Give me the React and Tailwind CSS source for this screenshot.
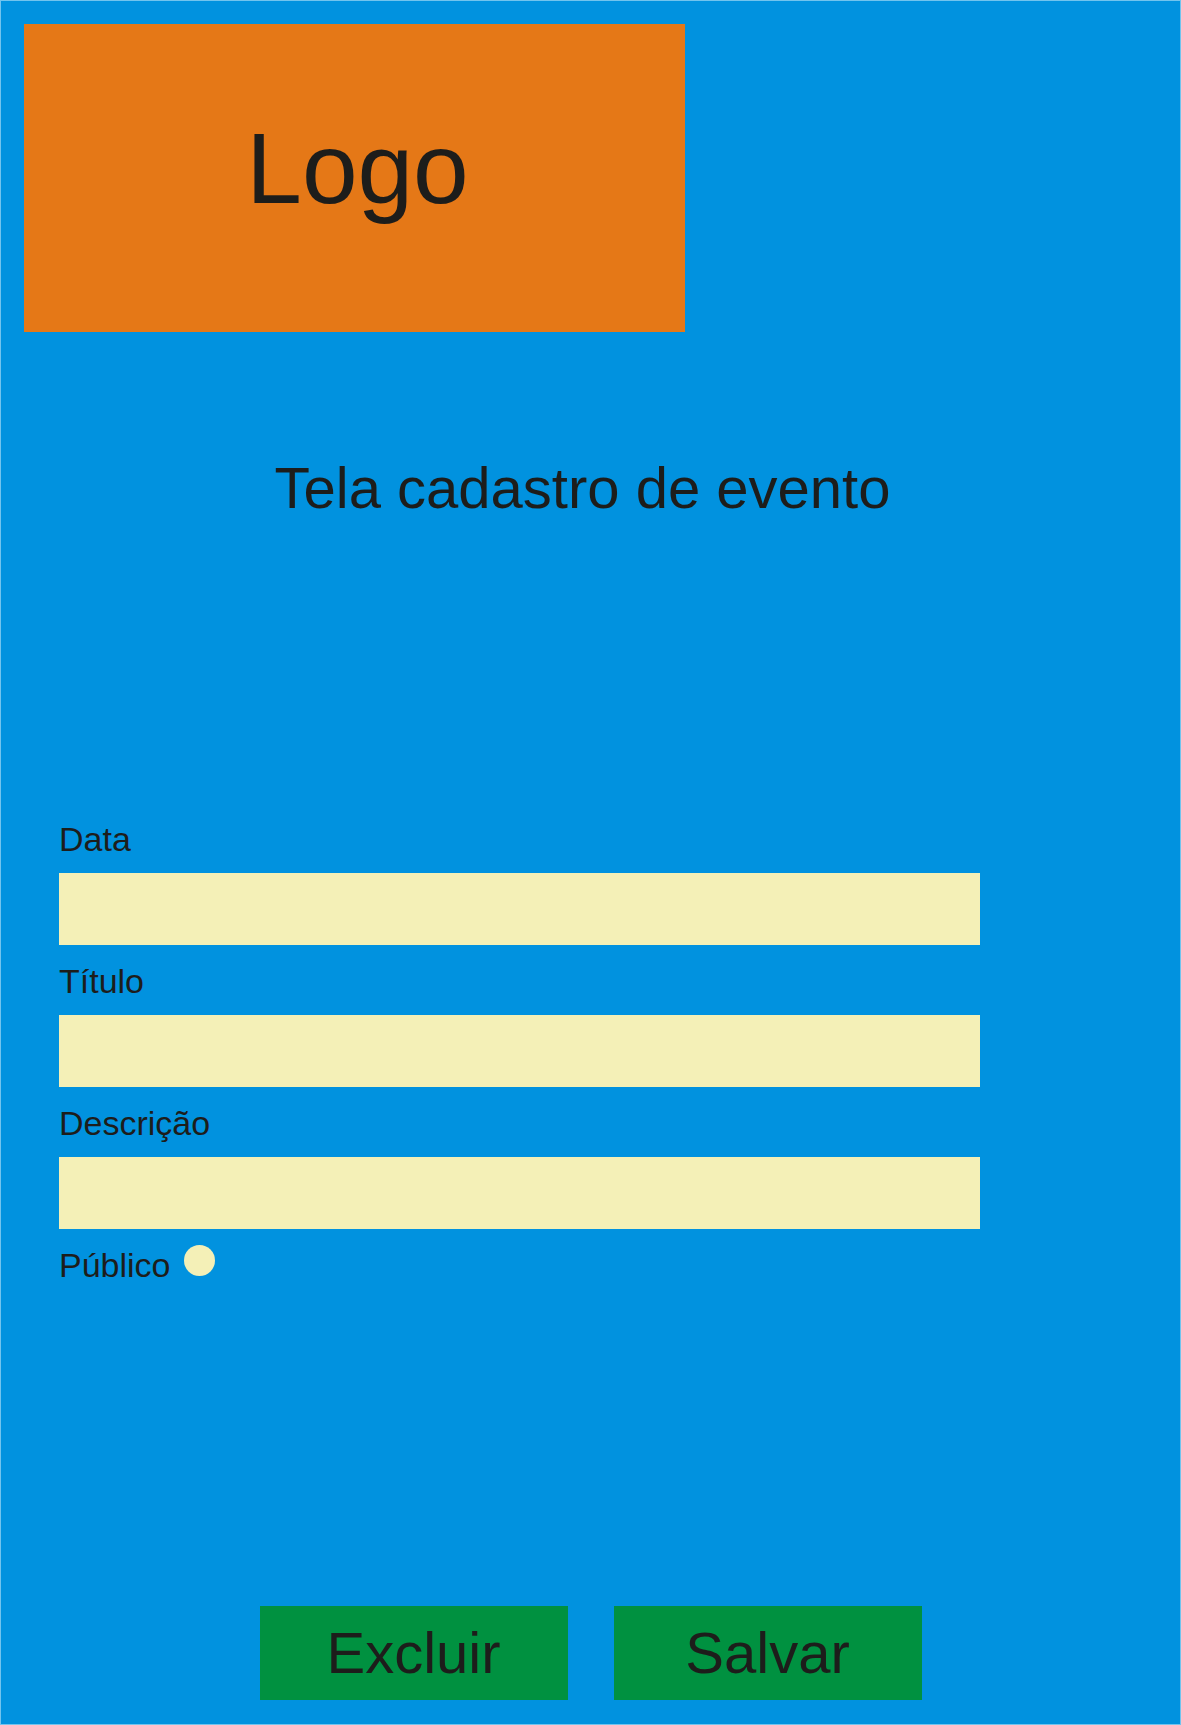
import React, { useState } from 'react';

const fields = [
    { label: 'Data', name: 'data' },
    { label: 'Título', name: 'titulo' },
    { label: 'Descrição', name: 'descricao' },
];

const App = () => {
    const [form, setForm] = useState({ data: '', titulo: '', descricao: '' });
    const [publico, setPublico] = useState(false);

    return (
        <div className="w-[1181px] h-[1725px] bg-[#0192df] border border-[#72c4ee] text-[#1d1d1b] font-['Liberation_Sans',Arial,sans-serif] flex flex-col">
            {/* logo */}
            <div className="ml-[23px] mt-[23px] w-[661px] h-[308px] bg-[#e57817] flex justify-center pt-[94px] pl-[6px]">
                <span className="text-[100px] leading-none">Logo</span>
            </div>

            {/* title */}
            <h1 className="mt-[127px] text-center pr-[16px] text-[58px] leading-none font-normal">
                Tela cadastro de evento
            </h1>

            {/* form */}
            <form className="mt-[305px] pl-[58px] flex flex-col">
                {fields.map((field, idx) => (
                    <div key={field.name} className={idx > 0 ? 'mt-[19px]' : ''}>
                        <label className="block text-[34px] leading-none">{field.label}</label>
                        <input
                            type="text"
                            name={field.name}
                            value={form[field.name]}
                            onChange={(e) => setForm({ ...form, [field.name]: e.target.value })}
                            className="block mt-[17px] w-[921px] h-[72px] bg-[#f4f0b7] px-4 text-2xl focus:outline-none"
                        />
                    </div>
                ))}

                <div className="mt-[19px] flex items-start gap-[13px]">
                    <span className="text-[34px] leading-none">Público</span>
                    <button
                        type="button"
                        onClick={() => setPublico(!publico)}
                        className="w-[31px] h-[31px] -mt-[3px] rounded-full bg-[#f4f0b7] flex items-center justify-center"
                    >
                        {publico && <span className="w-[13px] h-[13px] rounded-full bg-[#1d1d1b]"></span>}
                    </button>
                </div>
            </form>

            {/* actions */}
            <div className="mt-auto mb-[24px] flex justify-center gap-[46px]">
                <button className="w-[308px] h-[94px] bg-[#009140] text-[58px] leading-none">Excluir</button>
                <button className="w-[308px] h-[94px] bg-[#009140] text-[58px] leading-none">Salvar</button>
            </div>
        </div>
    );
};

export default App;
